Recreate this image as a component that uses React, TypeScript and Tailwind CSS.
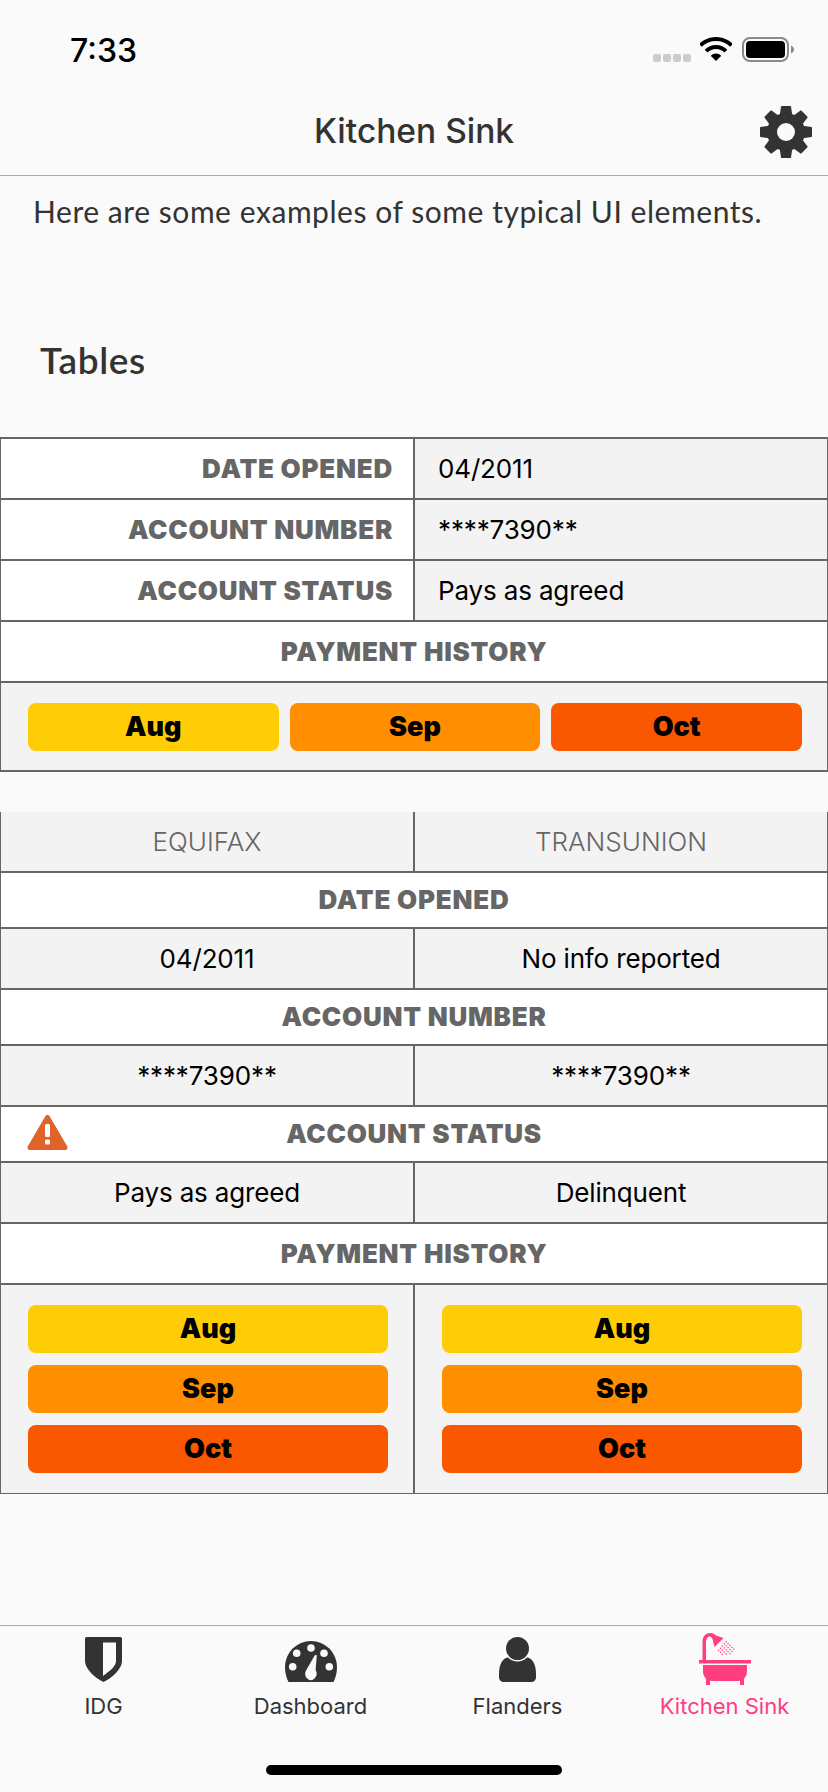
import type { ReactNode } from "react";

const teeth = [0, 45, 90, 135, 180, 225, 270, 315];

// shower spray, a slanted block of small dots
const spray: { x: number; y: number }[] = [];
for (let i = 0; i < 5; i++) {
  for (let j = 0; j < 5; j++) {
    if (i + j > 6) continue;
    spray.push({ x: 25.5 + j * 1.9 - i * 1.9 + 1, y: 8 + j * 1.9 + i * 2.2 });
  }
}

function Gear() {
  return (
    <svg width="54" height="54" viewBox="0 0 54 54" className="shrink-0">
      <g fill="#333333">
        {teeth.map((a) => (
          <path key={a} d="M22 1.5 Q22 1 23 1 H31 Q32 1 32 1.5 L33.5 12 H20.5 Z" transform={`rotate(${a} 27 27)`} />
        ))}
        <circle cx="27" cy="27" r="19" />
      </g>
      <circle cx="27" cy="27" r="9" fill="#fafafa" />
    </svg>
  );
}

function Wifi() {
  return (
    <svg width="32" height="24" viewBox="0 0 32 24" fill="none">
      <path d="M0.44 8.44 A22 22 0 0 1 31.56 8.44" stroke="#000" strokeWidth="4" />
      <path d="M6.1 14.1 A14 14 0 0 1 25.9 14.1" stroke="#000" strokeWidth="4" />
      <path d="M16 24 L10.7 18.7 A7.5 7.5 0 0 1 21.3 18.7 Z" fill="#000" />
    </svg>
  );
}

function Battery() {
  return (
    <svg width="52" height="25" viewBox="0 0 52 25" fill="none">
      <rect x="1" y="1" width="45" height="23" rx="7" stroke="#8a8a8a" strokeWidth="2" />
      <rect x="4" y="4" width="39" height="17" rx="4" fill="#000" />
      <path d="M49 8.5 C51 9.5 52 11 52 12.5 C52 14 51 15.5 49 16.5 Z" fill="#8a8a8a" />
    </svg>
  );
}

function WarningIcon() {
  return (
    <svg width="41" height="37" viewBox="0 0 41 37" className="blur-[0.5px]">
      <path d="M20.5 3.5 L38 33.5 H3 Z" fill="#e0642a" stroke="#e0642a" strokeWidth="5" strokeLinejoin="round" />
      <rect x="18" y="10" width="5" height="13" rx="1.5" fill="#fff" />
      <rect x="18" y="25.5" width="5" height="5" rx="1.5" fill="#fff" />
    </svg>
  );
}

function ShieldIcon() {
  return (
    <svg width="37" height="45" viewBox="0 0 37 45" className="mt-[4px]">
      <path d="M1.5 0 H35.5 Q37 0 37 1.5 V24 C37 32 27 41 18.5 45 C10 41 0 32 0 24 V1.5 Q0 0 1.5 0 Z" fill="#333333" />
      <path d="M18 5.5 H31 V24 C31 29 26 33 18 39 Z" fill="#fafafa" />
    </svg>
  );
}

function GaugeIcon() {
  return (
    <svg width="52" height="41" viewBox="0 0 52 41" className="mt-[8px]">
      <path d="M3.5 41 C1 36 0 31 0 26 A26 26 0 0 1 52 26 C52 31 51 36 48.5 41 Z" fill="#333333" />
      <g fill="#fafafa">
        <circle cx="26" cy="7" r="3.8" />
        <circle cx="11.7" cy="12.3" r="3.8" />
        <circle cx="39" cy="12.3" r="3.8" />
        <circle cx="7.7" cy="25.7" r="3.8" />
        <circle cx="44.3" cy="25.7" r="3.8" />
        <path d="M30 14 L31.8 14.3 L30.6 29 A5.6 6.5 0 1 1 21 29.5 Z" />
      </g>
    </svg>
  );
}

function PersonIcon() {
  return (
    <svg width="37" height="45" viewBox="0 0 37 45" className="mt-[4px]">
      <path d="M0 37 C0 28 3 21 10 20 H27 C34 21 37 28 37 37 V40 C37 43 35 45 32 45 H5 C2 45 0 43 0 40 Z" fill="#333333" />
      <circle cx="18.5" cy="11.5" r="13" fill="#fafafa" />
      <circle cx="18.5" cy="11.5" r="11.5" fill="#333333" />
    </svg>
  );
}

function TubIcon() {
  return (
    <svg width="52" height="52" viewBox="0 0 52 52">
      <g fill="#ff3d7f">
        <rect x="0" y="27" width="52" height="3.5" />
        <path d="M4 32 H48 V38 C48 44 44 48 39 48 H13 C8 48 4 44 4 38 Z" />
        <rect x="7" y="46" width="4" height="6" />
        <rect x="41" y="46" width="4" height="6" />
        <path d="M3.5 27 V9 C3.5 3 7 0 11.5 0 C14 0 15.5 1 17 2.5 L24.5 5 L15.5 14 L13.5 6 C12.5 4 11.5 3.5 10.5 3.5 C8.5 3.5 7 6 7 9 V27 Z" />
        {spray.map((p) => (
          <rect key={`${p.x}-${p.y}`} x={p.x} y={p.y} width="1.3" height="1.3" />
        ))}
      </g>
    </svg>
  );
}

function Label({ children }: { children: ReactNode }) {
  return <span className="text-[26px] leading-none font-black tracking-[0.75px] text-[#666666]">{children}</span>;
}

function HeaderRow({ children, tall }: { children: ReactNode; tall?: boolean }) {
  return (
    <div className={`flex items-center justify-center bg-white border-b-2 border-[#666666] ${tall ? "h-[61px]" : "h-[56px]"}`}>
      <Label>{children}</Label>
    </div>
  );
}

function ValueRow({ left, right }: { left: string; right: string }) {
  return (
    <div className="flex h-[61px] bg-[#f3f3f3] border-b-2 border-[#666666] text-[26px] tracking-[-0.15px] text-black">
      <div className="flex w-[414px] items-center justify-center border-r-2 border-[#666666]">{left}</div>
      <div className="flex flex-1 items-center justify-center">{right}</div>
    </div>
  );
}

function SideRow({ label, value }: { label: string; value: string }) {
  return (
    <div className="flex h-[61px] border-b-2 border-[#666666]">
      <div className="flex w-[414px] items-center justify-end border-r-2 border-[#666666] bg-white pr-[20px]">
        <Label>{label}</Label>
      </div>
      <div className="flex flex-1 items-center bg-[#f3f3f3] pl-[23px] text-[26px] tracking-[-0.15px] text-black">{value}</div>
    </div>
  );
}

function Pill({ month, color }: { month: string; color: string }) {
  return (
    <div className={`flex h-[48px] w-full items-center justify-center rounded-[8px] text-[27px] font-black text-black ${color}`}>
      {month}
    </div>
  );
}

function PillStack() {
  return (
    <div className="flex flex-col gap-3">
      <Pill month="Aug" color="bg-[#fecd06]" />
      <Pill month="Sep" color="bg-[#ff8f00]" />
      <Pill month="Oct" color="bg-[#f95700]" />
    </div>
  );
}

function TabItem({ icon, label, active }: { icon: ReactNode; label: string; active?: boolean }) {
  return (
    <div className="flex flex-col items-center">
      <div className="flex h-[52px] items-start">{icon}</div>
      <span className={`mt-[7px] text-[22px] leading-7 ${active ? "text-[#ff3d7f]" : "text-[#333333]"}`}>{label}</span>
    </div>
  );
}

export default function App() {
  return (
    <div className="flex h-[1792px] w-[828px] flex-col overflow-hidden bg-[#fafafa] font-['Inter',sans-serif]">
      <div className="flex h-[88px] items-start justify-between pt-[31px] pl-[70px] pr-[34px]">
        <span className="text-[32px] leading-10 font-medium text-black">7:33</span>
        <div className="mt-[6px] flex items-start">
          <div className="mt-[17px] flex gap-[2px]">
            <div className="h-2 w-2 rounded-[2px] bg-[#cccccc]" />
            <div className="h-2 w-2 rounded-[2px] bg-[#cccccc]" />
            <div className="h-2 w-2 rounded-[2px] bg-[#cccccc]" />
            <div className="h-2 w-2 rounded-[2px] bg-[#cccccc]" />
          </div>
          <div className="ml-[9px]"><Wifi /></div>
          <div className="ml-[10px]"><Battery /></div>
        </div>
      </div>

      <div className="grid h-[88px] grid-cols-[1fr_auto_1fr] items-center border-b-[1.5px] border-[#a8a8a8]">
        <div />
        <h1 className="text-[33.5px] font-medium text-[#333333]">Kitchen Sink</h1>
        <div className="flex justify-end pr-[15px]">
          <Gear />
        </div>
      </div>

      <main className="flex-1">
        <p className="mt-[15px] pl-[33px] font-['Lato',sans-serif] text-[30px] leading-10 tracking-[0.55px] text-[#333333]">
          Here are some examples of some typical UI elements.
        </p>
        <h2 className="mt-[109px] pl-[40px] font-['Lato',sans-serif] text-[37px] leading-10 font-semibold tracking-[0.6px] text-[#333333]">
          Tables
        </h2>

        <div className="mt-[57px] border-x border-t-2 border-[#666666]">
          <SideRow label="DATE OPENED" value="04/2011" />
          <SideRow label="ACCOUNT NUMBER" value="****7390**" />
          <SideRow label="ACCOUNT STATUS" value="Pays as agreed" />
          <HeaderRow tall>PAYMENT HISTORY</HeaderRow>
          <div className="grid grid-cols-3 gap-[11px] border-b-2 border-[#666666] bg-[#f3f3f3] pt-[20px] pr-[25px] pb-[19px] pl-[27px]">
            <Pill month="Aug" color="bg-[#fecd06]" />
            <Pill month="Sep" color="bg-[#ff8f00]" />
            <Pill month="Oct" color="bg-[#f95700]" />
          </div>
        </div>

        <div className="mt-[40px] border-x border-[#666666]">
          <div className="flex h-[61px] border-b-2 border-[#666666] bg-[#f3f3f3] text-[26px] font-light text-[#666666]">
            <div className="flex w-[414px] items-center justify-center border-r-2 border-[#666666]">EQUIFAX</div>
            <div className="flex flex-1 items-center justify-center">TRANSUNION</div>
          </div>
          <HeaderRow>DATE OPENED</HeaderRow>
          <ValueRow left="04/2011" right="No info reported" />
          <HeaderRow>ACCOUNT NUMBER</HeaderRow>
          <ValueRow left="****7390**" right="****7390**" />
          <div className="grid h-[56px] grid-cols-[1fr_auto_1fr] items-center border-b-2 border-[#666666] bg-white">
            <div className="pb-[4px] pl-[26px]">
              <WarningIcon />
            </div>
            <Label>ACCOUNT STATUS</Label>
            <div />
          </div>
          <ValueRow left="Pays as agreed" right="Delinquent" />
          <HeaderRow tall>PAYMENT HISTORY</HeaderRow>
          <div className="flex border-b-[1.5px] border-[#666666] bg-[#f3f3f3]">
            <div className="w-[414px] border-r-2 border-[#666666] pt-[20px] pr-[25px] pb-[20px] pl-[27px]">
              <PillStack />
            </div>
            <div className="flex-1 pt-[20px] pr-[25px] pb-[20px] pl-[27px]">
              <PillStack />
            </div>
          </div>
        </div>
      </main>

      <footer className="h-[167px] border-t-[1.5px] border-[#a8a8a8] pt-[7px]">
        <div className="grid grid-cols-4">
          <TabItem icon={<ShieldIcon />} label="IDG" />
          <TabItem icon={<GaugeIcon />} label="Dashboard" />
          <TabItem icon={<PersonIcon />} label="Flanders" />
          <TabItem icon={<TubIcon />} label="Kitchen Sink" active />
        </div>
        <div className="mt-[45px] flex justify-center">
          <div className="h-[10px] w-[296px] rounded-full bg-black" />
        </div>
      </footer>
    </div>
  );
}
